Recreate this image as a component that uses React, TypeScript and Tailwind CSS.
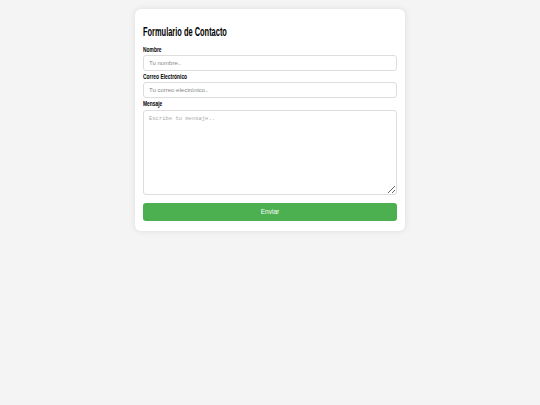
const labelCls =
  "block origin-left scale-x-[0.7] text-[7px] font-bold leading-[8px] text-black";

export default function App() {
  return (
    <div className="min-h-screen bg-[#f4f4f4] pt-[9px] font-['Liberation_Sans',Arial,sans-serif]">
      <div className="mx-auto w-[270px] rounded-md bg-white px-2 pb-[10px] pt-[16px] shadow-[0_0_6px_rgba(0,0,0,0.1)]">
        <h2 className="mb-[7px] block origin-left scale-x-[0.62] text-[12px] font-bold leading-[14px] text-black">
          Formulario de Contacto
        </h2>
        <form className="flex flex-col" onSubmit={(e) => e.preventDefault()}>
          <label className={`${labelCls} mb-[1px]`}>Nombre</label>
          <input
            type="text"
            placeholder="Tu nombre.."
            className="h-4 rounded-[3px] border border-[#ddd] px-[5px] text-[6px] outline-none placeholder:text-[#888]"
          />
          <label className={`${labelCls} mb-[1px] mt-[2px]`}>Correo Electrónico</label>
          <input
            type="email"
            placeholder="Tu correo electrónico.."
            className="h-4 rounded-[3px] border border-[#ddd] px-[5px] text-[6px] outline-none placeholder:text-[#888]"
          />
          <label className={`${labelCls} mb-[2px] mt-[2px]`}>Mensaje</label>
          <textarea
            placeholder="Escribe tu mensaje.."
            className="h-[85px] rounded-[3px] border border-[#ddd] px-[5px] py-[4px] font-['Liberation_Mono',monospace] text-[5.5px] outline-none placeholder:text-[#aaa]"
          />
          <button
            type="submit"
            className="mt-[8px] h-[18px] rounded-[3px] bg-[#4caf50] text-[6.5px] text-white"
          >
            Enviar
          </button>
        </form>
      </div>
    </div>
  );
}
